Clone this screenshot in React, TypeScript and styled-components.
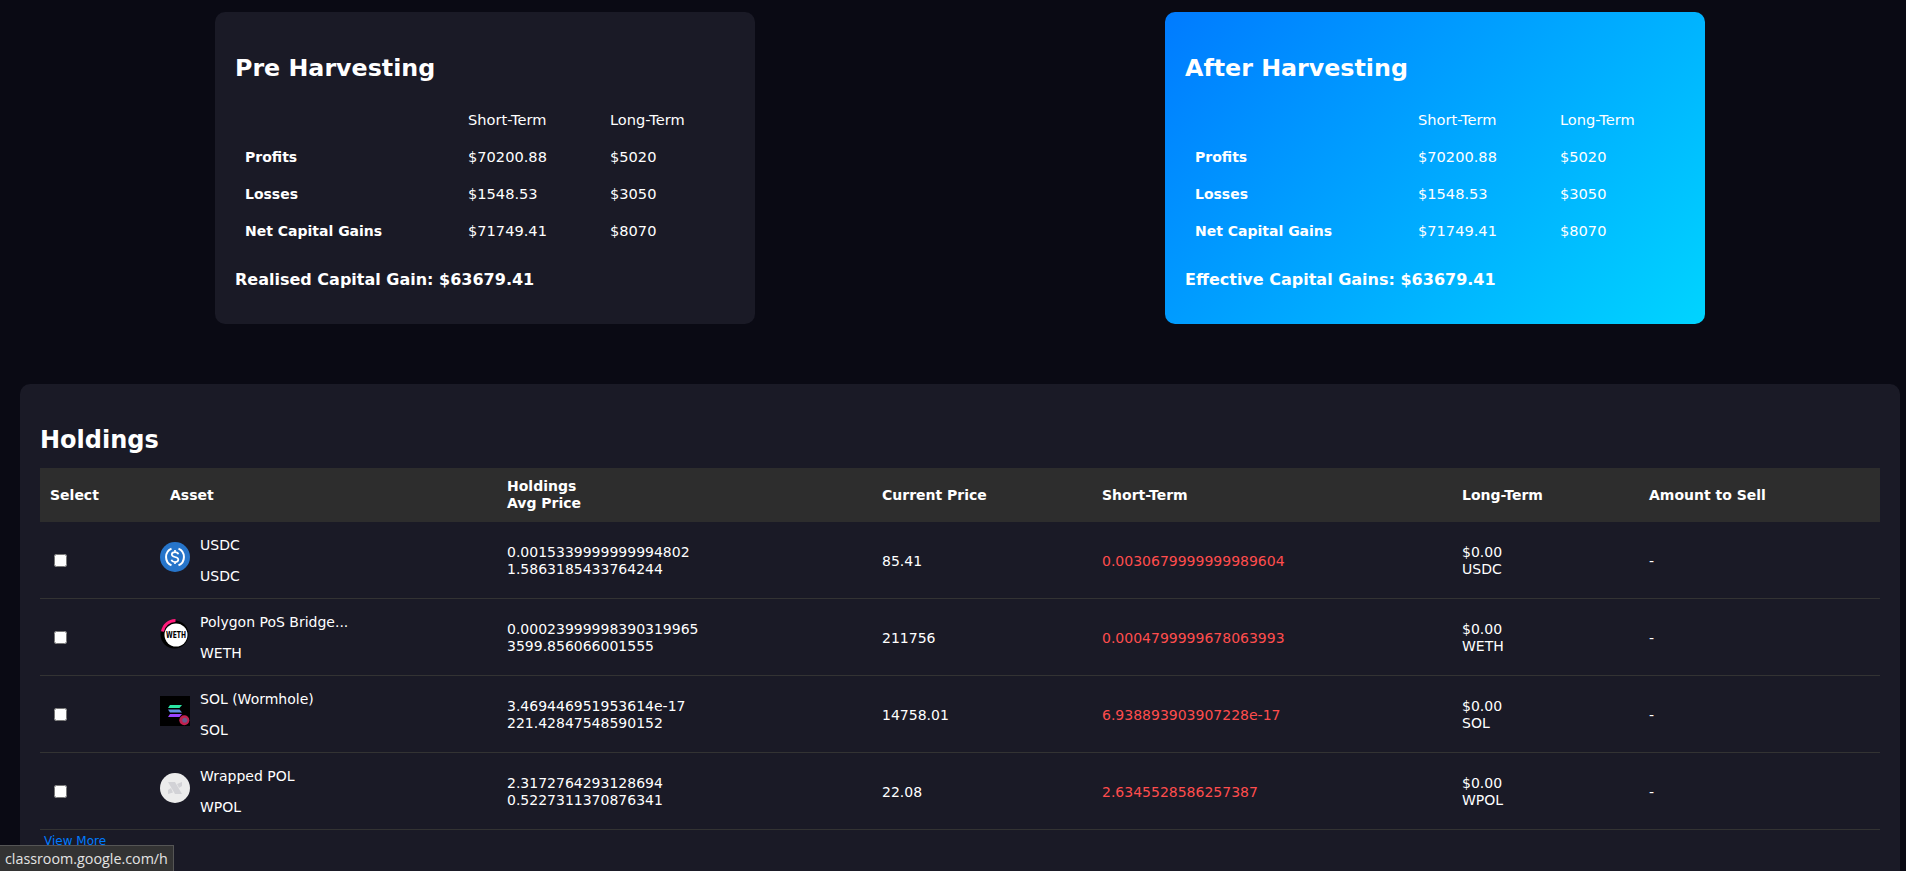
import React from 'react';
import styled, { createGlobalStyle } from 'styled-components';

const GlobalStyle = createGlobalStyle`
  html, body {
    margin: 0;
    height: 100%;
    overflow: hidden;
    background: #0a0a14;
  }
  body {
    color: #fff;
    font-family: 'DejaVu Sans', Verdana, sans-serif;
    font-size: 14px;
    line-height: 17px;
  }
`;

const Page = styled.div`
  height: 871px;
  overflow: hidden;
  padding: 12px 6px 0 20px;
`;

const Cards = styled.section`
  display: flex;
  justify-content: center;
  gap: 410px;
  margin-bottom: 60px;
`;

const Card = styled.div<{ $highlight?: boolean }>`
  width: 540px;
  height: 312px;
  box-sizing: border-box;
  padding: 20px;
  border-radius: 10px;
  background: ${({ $highlight }) =>
    $highlight ? 'linear-gradient(135deg, #007bff, #00d4ff)' : '#1a1a26'};
`;

const CardTitle = styled.h2`
  margin: 22px 0 18px;
  font-size: 23.75px;
  line-height: 29px;
`;

const SummaryTable = styled.table`
  width: 500px;
  table-layout: fixed;
  border-collapse: collapse;

  th, td {
    padding: 10px;
    text-align: left;
    font-size: 14.6px;
    font-weight: 400;
  }

  th:first-child, td:first-child {
    width: 203px;
    padding: 11px 10px 9px;
    font-size: 14px;
    font-weight: 700;
  }

  th:nth-child(2) {
    width: 122px;
  }
`;

const CardTotal = styled.h3`
  margin: 21px 0 0;
  font-size: 16px;
  line-height: 19px;
`;

const Panel = styled.section`
  width: 1880px;
  box-sizing: border-box;
  padding: 20px 20px 60px;
  border-radius: 10px;
  background: #1a1a26;
`;

const PanelTitle = styled.h2`
  margin: 22px 0 13px;
  font-size: 24px;
  line-height: 29px;
`;

const HoldingsTable = styled.table`
  width: 1840px;
  table-layout: fixed;
  border-collapse: collapse;
`;

const HeaderCell = styled.th<{ $width: number; $indent?: number }>`
  width: ${({ $width }) => $width}px;
  box-sizing: border-box;
  padding: 10px 10px 10px ${({ $indent }) => $indent ?? 10}px;
  background: #2d2d2d;
  text-align: left;
  font-size: 14px;
  font-weight: 700;
`;

const Cell = styled.td<{ $loss?: boolean }>`
  padding: 15px 10px 13px;
  border-bottom: 1px solid #333;
  color: ${({ $loss }) => ($loss ? '#ff4d4d' : '#fff')};
`;

const CheckCell = styled(Cell)`
  padding-left: 14px;
`;

const Check = styled.input`
  display: block;
  width: 13px;
  height: 13px;
  margin: 0 0 2px;
`;

const Asset = styled.div`
  display: flex;
  align-items: center;
  gap: 10px;
`;

const AssetIcon = styled.svg`
  flex: none;
  width: 30px;
  height: 30px;
  margin-bottom: 8px;
`;

const AssetName = styled.p`
  margin: 0 0 14px;
`;

const AssetSymbol = styled.p`
  margin: 0;
`;

const ViewMore = styled.button`
  display: block;
  margin-top: 4px;
  padding: 0 4px;
  border: none;
  background: none;
  color: #007bff;
  font-family: inherit;
  font-size: 12px;
  line-height: 14px;
`;

const StatusBubble = styled.div`
  position: fixed;
  left: 0;
  bottom: 0;
  box-sizing: border-box;
  height: 26px;
  padding: 0 5px;
  border-top: 1px solid #555;
  border-right: 1px solid #555;
  background: #333;
  color: #e3e3e3;
  font-family: 'Open Sans', sans-serif;
  font-size: 14.3px;
  line-height: 25px;
  white-space: nowrap;
`;

const UsdcIcon = () => (
  <AssetIcon viewBox="0 0 30 30">
    <circle cx="15" cy="15" r="15" fill="#2775ca" />
    <path d="M11.5 6.6a9.2 9.2 0 0 0 0 16.8M18.5 6.6a9.2 9.2 0 0 1 0 16.8" fill="none" stroke="#fff" strokeWidth="2" />
    <path d="M18.4 12.2c-.4-1.300-1.700-2.100-3.400-2.100-1.900 0-3.200 1-3.200 2.400 0 3.400 6.500 1.500 6.500 5 0 1.500-1.400 2.500-3.300 2.500-1.800 0-3.100-.8-3.600-2.200M15 8v2.100M15 20v2" fill="none" stroke="#fff" strokeWidth="1.700" />
  </AssetIcon>
);

const WethIcon = () => (
  <AssetIcon viewBox="0 0 30 30">
    <circle cx="14.500" cy="15.500" r="14" fill="#000" />
    <path d="M2.500 12.500A13 13 0 0 1 15.500 1.500" fill="none" stroke="#ff1a7a" strokeWidth="3" />
    <circle cx="16" cy="16" r="11.500" fill="#fff" />
    <text
      x="6"
      y="19.300"
      textLength="20"
      lengthAdjust="spacingAndGlyphs"
      fontFamily="'DejaVu Sans', sans-serif"
      fontSize="9"
      fontWeight="700"
      fill="#000"
    >
      WETH
    </text>
  </AssetIcon>
);

const SolIcon = () => (
  <AssetIcon viewBox="0 0 30 30">
    <rect width="30" height="30" fill="#000" />
    <path d="M10 9h12l-2.500 3H8z" fill="#2be6a4" />
    <path d="M8 13.500h11.500l2.500 3H10z" fill="#5f8fe0" />
    <path d="M10 18h12l-2.500 3H8z" fill="#9945ff" />
    <circle cx="24.300" cy="24.300" r="5" fill="#c2204f" />
    <circle cx="24.800" cy="24.300" r="2.500" fill="#6a5a8c" />
  </AssetIcon>
);

const WpolIcon = () => (
  <AssetIcon viewBox="0 0 30 30">
    <circle cx="15" cy="15" r="15" fill="#ececec" />
    <path d="M8 9h7l7 12h-7zM22 9v4l-3 2-2-4zM8 21v-4l3-2 2 4.500z" fill="#d2d2d6" />
  </AssetIcon>
);

const summaryRows = [
  { label: 'Profits', short: '$70200.88', long: '$5020' },
  { label: 'Losses', short: '$1548.53', long: '$3050' },
  { label: 'Net Capital Gains', short: '$71749.41', long: '$8070' },
];

const holdings = [
  {
    icon: <UsdcIcon />,
    name: 'USDC',
    symbol: 'USDC',
    amount: '0.0015339999999994802',
    avg: '1.5863185433764244',
    price: '85.41',
    short: '0.0030679999999989604',
  },
  {
    icon: <WethIcon />,
    name: 'Polygon PoS Bridge...',
    symbol: 'WETH',
    amount: '0.00023999998390319965',
    avg: '3599.856066001555',
    price: '211756',
    short: '0.0004799999678063993',
  },
  {
    icon: <SolIcon />,
    name: 'SOL (Wormhole)',
    symbol: 'SOL',
    amount: '3.469446951953614e-17',
    avg: '221.42847548590152',
    price: '14758.01',
    short: '6.938893903907228e-17',
  },
  {
    icon: <WpolIcon />,
    name: 'Wrapped POL',
    symbol: 'WPOL',
    amount: '2.3172764293128694',
    avg: '0.5227311370876341',
    price: '22.08',
    short: '2.6345528586257387',
  },
];

function SummaryCard({ title, total, highlight }: { title: string; total: string; highlight?: boolean }) {
  return (
    <Card $highlight={highlight}>
      <CardTitle>{title}</CardTitle>
      <SummaryTable>
        <thead>
          <tr>
            <th></th>
            <th>Short-Term</th>
            <th>Long-Term</th>
          </tr>
        </thead>
        <tbody>
          {summaryRows.map((row) => (
            <tr key={row.label}>
              <td>{row.label}</td>
              <td>{row.short}</td>
              <td>{row.long}</td>
            </tr>
          ))}
        </tbody>
      </SummaryTable>
      <CardTotal>{total}</CardTotal>
    </Card>
  );
}

function App() {
  return (
    <Page>
      <GlobalStyle />
      <Cards>
        <SummaryCard title="Pre Harvesting" total="Realised Capital Gain: $63679.41" />
        <SummaryCard title="After Harvesting" total="Effective Capital Gains: $63679.41" highlight />
      </Cards>

      <Panel>
        <PanelTitle>Holdings</PanelTitle>
        <HoldingsTable>
          <thead>
            <tr>
              <HeaderCell $width={110}>Select</HeaderCell>
              <HeaderCell $width={347} $indent={20}>Asset</HeaderCell>
              <HeaderCell $width={375}>
                Holdings
                <br />
                Avg Price
              </HeaderCell>
              <HeaderCell $width={220}>Current Price</HeaderCell>
              <HeaderCell $width={360}>Short-Term</HeaderCell>
              <HeaderCell $width={187}>Long-Term</HeaderCell>
              <HeaderCell $width={241}>Amount to Sell</HeaderCell>
            </tr>
          </thead>
          <tbody>
            {holdings.map((item) => (
              <tr key={item.symbol}>
                <CheckCell>
                  <Check type="checkbox" />
                </CheckCell>
                <Cell>
                  <Asset>
                    {item.icon}
                    <div>
                      <AssetName>{item.name}</AssetName>
                      <AssetSymbol>{item.symbol}</AssetSymbol>
                    </div>
                  </Asset>
                </Cell>
                <Cell>
                  {item.amount}
                  <br />
                  {item.avg}
                </Cell>
                <Cell>{item.price}</Cell>
                <Cell $loss>{item.short}</Cell>
                <Cell>
                  $0.00
                  <br />
                  {item.symbol}
                </Cell>
                <Cell>-</Cell>
              </tr>
            ))}
          </tbody>
        </HoldingsTable>
        <ViewMore>View More</ViewMore>
      </Panel>

      <StatusBubble>classroom.google.com/h</StatusBubble>
    </Page>
  );
}

export default App;
